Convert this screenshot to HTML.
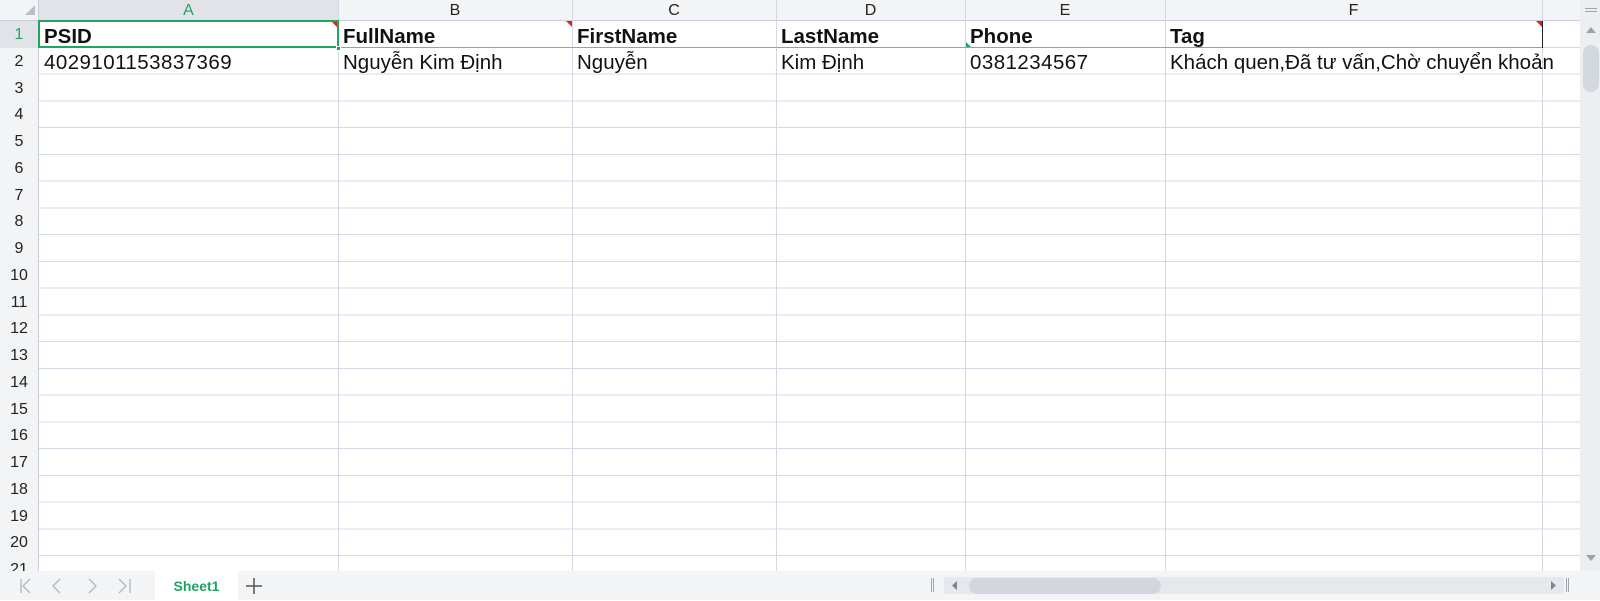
<!DOCTYPE html>
<html><head><meta charset="utf-8"><style>
*{margin:0;padding:0;box-sizing:border-box}
body{width:1600px;height:600px;overflow:hidden;background:#fff;font-family:"Liberation Sans",Arial,sans-serif;position:relative}
.abs{position:absolute}
#colhdr{left:0;top:0;width:1580px;height:21px;background:#f3f4f6;border-bottom:1px solid #c9ceda}
#rowhdr{left:0;top:21px;width:39px;height:550px;background:#f3f4f6;border-right:1px solid #c9ceda}
#grid{left:39px;top:21px;width:1541px;height:550px;
background:repeating-linear-gradient(to bottom,transparent 0,transparent 25.75px,#d3d8e4 25.75px,#d3d8e4 26.75px)}
.vl{position:absolute;top:0;width:1px;height:571px;background:#d3d8e4}
.ch{position:absolute;top:0;height:21px;font-size:16px;line-height:22px;text-align:center;color:#222}
.rh{position:absolute;left:0;width:38px;font-size:16px;text-align:center;color:#222;line-height:26px}
.c{position:absolute;font-size:20.5px;color:#111;line-height:26px;white-space:nowrap}
.b{font-weight:bold}
.d{letter-spacing:0.45px}
</style></head><body>
<div id="colhdr" class="abs"></div>
<div class="abs" style="left:39px;top:0;width:299px;height:21px;background:#e1e3e8"></div>
<div id="rowhdr" class="abs"></div>
<div class="abs" style="left:0;top:21px;width:38px;height:27px;background:#e1e3e8"></div>
<svg class="abs" style="left:24px;top:4px" width="12" height="12"><polygon points="11,1 11,11 1,11" fill="#b9bec8"/></svg>
<div id="grid" class="abs"></div>
<div class="vl" style="left:38px;background:#c9ceda"></div>
<div class="vl" style="left:338px"></div>
<div class="vl" style="left:572px"></div>
<div class="vl" style="left:776px"></div>
<div class="vl" style="left:965px"></div>
<div class="vl" style="left:1165px"></div>
<div class="vl" style="left:1542px"></div>
<div class="abs" style="left:1542px;top:21px;width:1px;height:27px;background:#222"></div>
<div class="abs" style="left:1165px;top:47px;width:377px;height:1px;background:#222"></div>
<div class="abs" style="left:39px;top:47px;width:1503px;height:1px;background:#9aa0aa"></div>

<div class="ch" style="left:39px;width:299px;color:#1fa462">A</div>
<div class="ch" style="left:338px;width:234px">B</div>
<div class="ch" style="left:572px;width:204px">C</div>
<div class="ch" style="left:776px;width:189px">D</div>
<div class="ch" style="left:965px;width:200px">E</div>
<div class="ch" style="left:1165px;width:377px">F</div>

<div class="rh" style="top:22px;color:#1fa462">1</div>
<div class="rh" style="top:48.75px">2</div>
<div class="rh" style="top:75.5px">3</div>
<div class="rh" style="top:102.25px">4</div>
<div class="rh" style="top:129px">5</div>
<div class="rh" style="top:155.75px">6</div>
<div class="rh" style="top:182.5px">7</div>
<div class="rh" style="top:209.25px">8</div>
<div class="rh" style="top:236px">9</div>
<div class="rh" style="top:262.75px">10</div>
<div class="rh" style="top:289.5px">11</div>
<div class="rh" style="top:316.25px">12</div>
<div class="rh" style="top:343px">13</div>
<div class="rh" style="top:369.75px">14</div>
<div class="rh" style="top:396.5px">15</div>
<div class="rh" style="top:423.25px">16</div>
<div class="rh" style="top:450px">17</div>
<div class="rh" style="top:476.75px">18</div>
<div class="rh" style="top:503.5px">19</div>
<div class="rh" style="top:530.25px">20</div>
<div class="rh" style="top:557px">21</div>

<div class="c b" style="left:44px;top:23.5px">PSID</div>
<div class="c b" style="left:343px;top:23.5px">FullName</div>
<div class="c b" style="left:577px;top:23.5px">FirstName</div>
<div class="c b" style="left:781px;top:23.5px">LastName</div>
<div class="c b" style="left:970px;top:23.5px">Phone</div>
<div class="c b" style="left:1170px;top:23.5px">Tag</div>
<div class="c d" style="left:44px;top:50px">4029101153837369</div>
<div class="c" style="left:343px;top:50px">Nguyễn Kim Định</div>
<div class="c" style="left:577px;top:50px">Nguyễn</div>
<div class="c" style="left:781px;top:50px">Kim Định</div>
<div class="c d" style="left:970px;top:50px">0381234567</div>
<div class="c" style="left:1170px;top:50px">Khách quen,Đã tư vấn,Chờ chuyển khoản</div>

<div class="abs" style="left:38px;top:20px;width:301px;height:28px;border:2px solid #1fa462"></div>
<div class="abs" style="left:336px;top:46px;width:5px;height:5px;background:#1fa462;border:1px solid #fff"></div>
<svg class="abs" style="left:566px;top:21px" width="6" height="6"><polygon points="0,0 6,0 6,6" fill="#e02020"/></svg>
<svg class="abs" style="left:1536px;top:21px" width="6" height="6"><polygon points="0,0 6,0 6,6" fill="#e02020"/></svg>
<svg class="abs" style="left:332px;top:22px" width="5" height="5"><polygon points="0,0 5,0 5,5" fill="#e02020"/></svg>
<svg class="abs" style="left:966px;top:42px" width="5" height="5"><polygon points="0,0 0,5 5,5" fill="#1fa462"/></svg>

<!-- vertical scrollbar -->
<div class="abs" style="left:1580px;top:0;width:20px;height:571px;background:#eceef2"></div>
<div class="abs" style="left:1585px;top:8px;width:12px;height:1px;background:#a0a6b0"></div>
<div class="abs" style="left:1585px;top:11px;width:12px;height:1px;background:#a0a6b0"></div>
<svg class="abs" style="left:1586px;top:27px" width="10" height="6"><polygon points="5,0 10,6 0,6" fill="#9aa2b2"/></svg>
<div class="abs" style="left:1583px;top:45px;width:16px;height:47px;background:#d3d7de;border-radius:8px"></div>
<svg class="abs" style="left:1586px;top:555px" width="10" height="6"><polygon points="0,0 10,0 5,6" fill="#9aa2b2"/></svg>

<!-- bottom bar -->
<div class="abs" style="left:0;top:571px;width:1600px;height:29px;background:#f3f4f6"></div>
<svg class="abs" style="left:18px;top:577px" width="120" height="18" fill="none" stroke="#b0b5bf" stroke-width="1.3">
<path d="M3 2v14M12 2L5 9l7 7"/><path d="M42 2l-7 7 7 7"/><path d="M71 2l7 7-7 7"/><path d="M101 2l7 7-7 7M112 2v14"/></svg>
<div class="abs" style="left:155px;top:571px;width:83px;height:29px;background:#fff;color:#1fa462;font-weight:bold;font-size:14px;text-align:center;line-height:30px">Sheet1</div>
<svg class="abs" style="left:245px;top:577px" width="18" height="18" stroke="#555" stroke-width="1.5"><path d="M9 1v16M1 9h16"/></svg>
<div class="abs" style="left:931px;top:578px;width:1px;height:14px;background:#a0a6b0"></div>
<div class="abs" style="left:933px;top:578px;width:1px;height:14px;background:#a0a6b0"></div>
<div class="abs" style="left:944px;top:577px;width:620px;height:17px;background:#e6e8ed"></div>
<svg class="abs" style="left:952px;top:581px" width="5" height="9"><polygon points="5,0 5,9 0,4.5" fill="#7e8594"/></svg>
<div class="abs" style="left:969px;top:578px;width:192px;height:16px;background:#d2d6de;border-radius:8px"></div>
<svg class="abs" style="left:1551px;top:581px" width="5" height="9"><polygon points="0,0 0,9 5,4.5" fill="#7e8594"/></svg>
<div class="abs" style="left:1566px;top:578px;width:1px;height:14px;background:#a0a6b0"></div>
<div class="abs" style="left:1568px;top:578px;width:1px;height:14px;background:#a0a6b0"></div>
</body></html>
